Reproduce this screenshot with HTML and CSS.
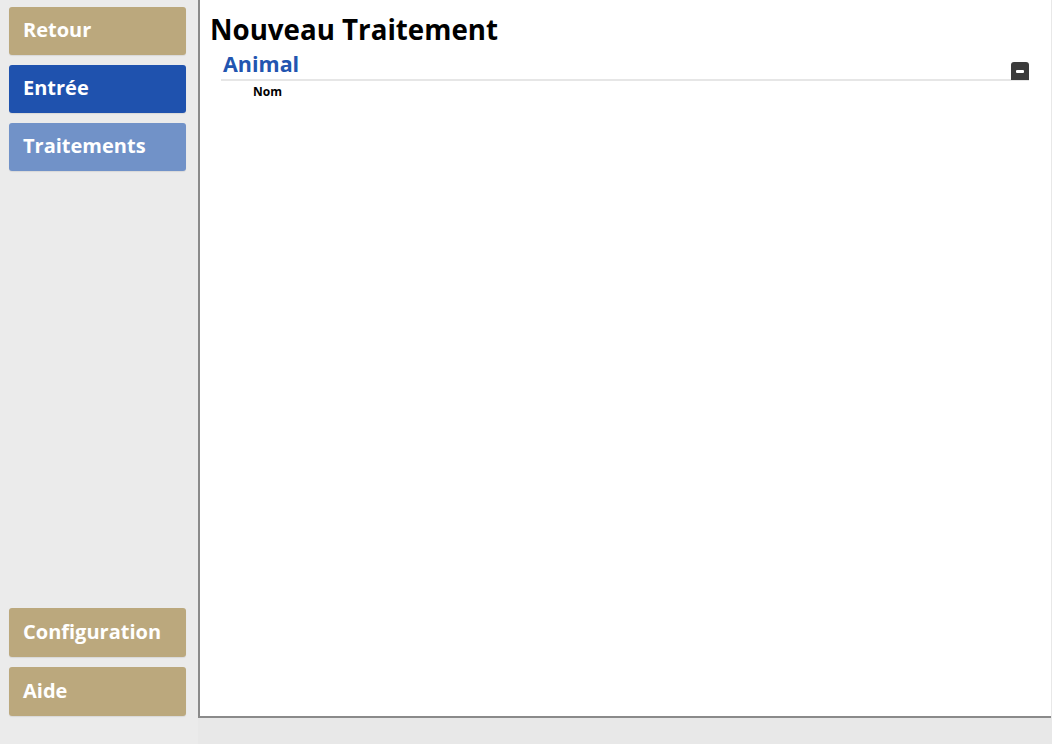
FILE: index.html
```html
<!DOCTYPE html>
<html lang="fr">
<head>
<meta charset="utf-8">
<link rel="stylesheet" href="styles.css">
</head>
<body>
<div class="app">
  <nav class="sidebar">
    <div class="nav-top">
      <button class="nav-btn tan">Retour</button>
      <button class="nav-btn blue">Entrée</button>
      <button class="nav-btn light">Traitements</button>
    </div>
    <div class="nav-bottom">
      <button class="nav-btn tan tall">Configuration</button>
      <button class="nav-btn tan tall">Aide</button>
    </div>
  </nav>
  <main class="panel">
    <h1 class="title">Nouveau Traitement</h1>
    <section class="group">
      <div class="group-head">
        <h2 class="group-title">Animal</h2>
        <button class="collapse"><span class="minus"></span></button>
      </div>
      <div class="field-label">Nom</div>
    </section>
  </main>
</div>
</body>
</html>
```
FILE: styles.css
```css
html, body {
  margin: 0;
  padding: 0;
  height: 100%;
}
body {
  background: #e8e8e8;
  font-family: "Open Sans", "Noto Sans", sans-serif;
}
.app {
  display: flex;
  height: 744px;
  background: #e8e8e8;
}
.sidebar {
  width: 198px;
  flex: none;
  display: flex;
  flex-direction: column;
  justify-content: space-between;
  padding: 7px 0 28px 9px;
  box-sizing: border-box;
  background: #ebebeb;
}
.nav-top, .nav-bottom {
  display: flex;
  flex-direction: column;
  gap: 10px;
}
.nav-btn {
  width: 177px;
  height: 48px;
  border: none;
  border-radius: 3px;
  color: #fff;
  font-family: "Open Sans", sans-serif;
  font-weight: 700;
  font-size: 20px;
  text-align: left;
  padding: 0 0 3px 14px;
  box-shadow: 0 1px 1px rgba(0,0,0,0.08);
}
.nav-btn.tall { height: 49px; }
.tan { background: #bba87d; }
.blue { background: #1f52ae; }
.light { background: #7192c8; }
.panel {
  flex: none;
  width: 853px;
  height: 718px;
  box-sizing: border-box;
  background: #fff;
  border-left: 2px solid #8a8a8a;
  border-bottom: 2px solid #8a8a8a;
  padding: 10px 22px 0 10px;
}
.title {
  margin: 0;
  font-size: 27.7px;
  font-weight: 700;
  line-height: 38px;
  color: #000;
}
.group {
  padding-left: 11px;
}
.group-head {
  display: flex;
  justify-content: space-between;
  align-items: flex-end;
  border-bottom: 2px solid #e6e6e6;
  height: 31px;
}
.group-title {
  margin: 0 0 1px 2px;
  font-size: 21.5px;
  line-height: 28px;
  font-weight: 700;
  color: #2255b0;
}
.collapse {
  width: 18px;
  height: 18px;
  margin-bottom: -1px;
  border: none;
  padding: 0;
  background: #3b3b3b;
  border-radius: 3px 3px 0 0;
  display: flex;
  align-items: center;
  justify-content: center;
}
.minus {
  display: block;
  width: 8px;
  height: 3px;
  background: #fff;
  border-radius: 1px;
}
.field-label {
  margin: 2px 0 0 32px;
  font-size: 12px;
  font-weight: 700;
  color: #000;
}
```
